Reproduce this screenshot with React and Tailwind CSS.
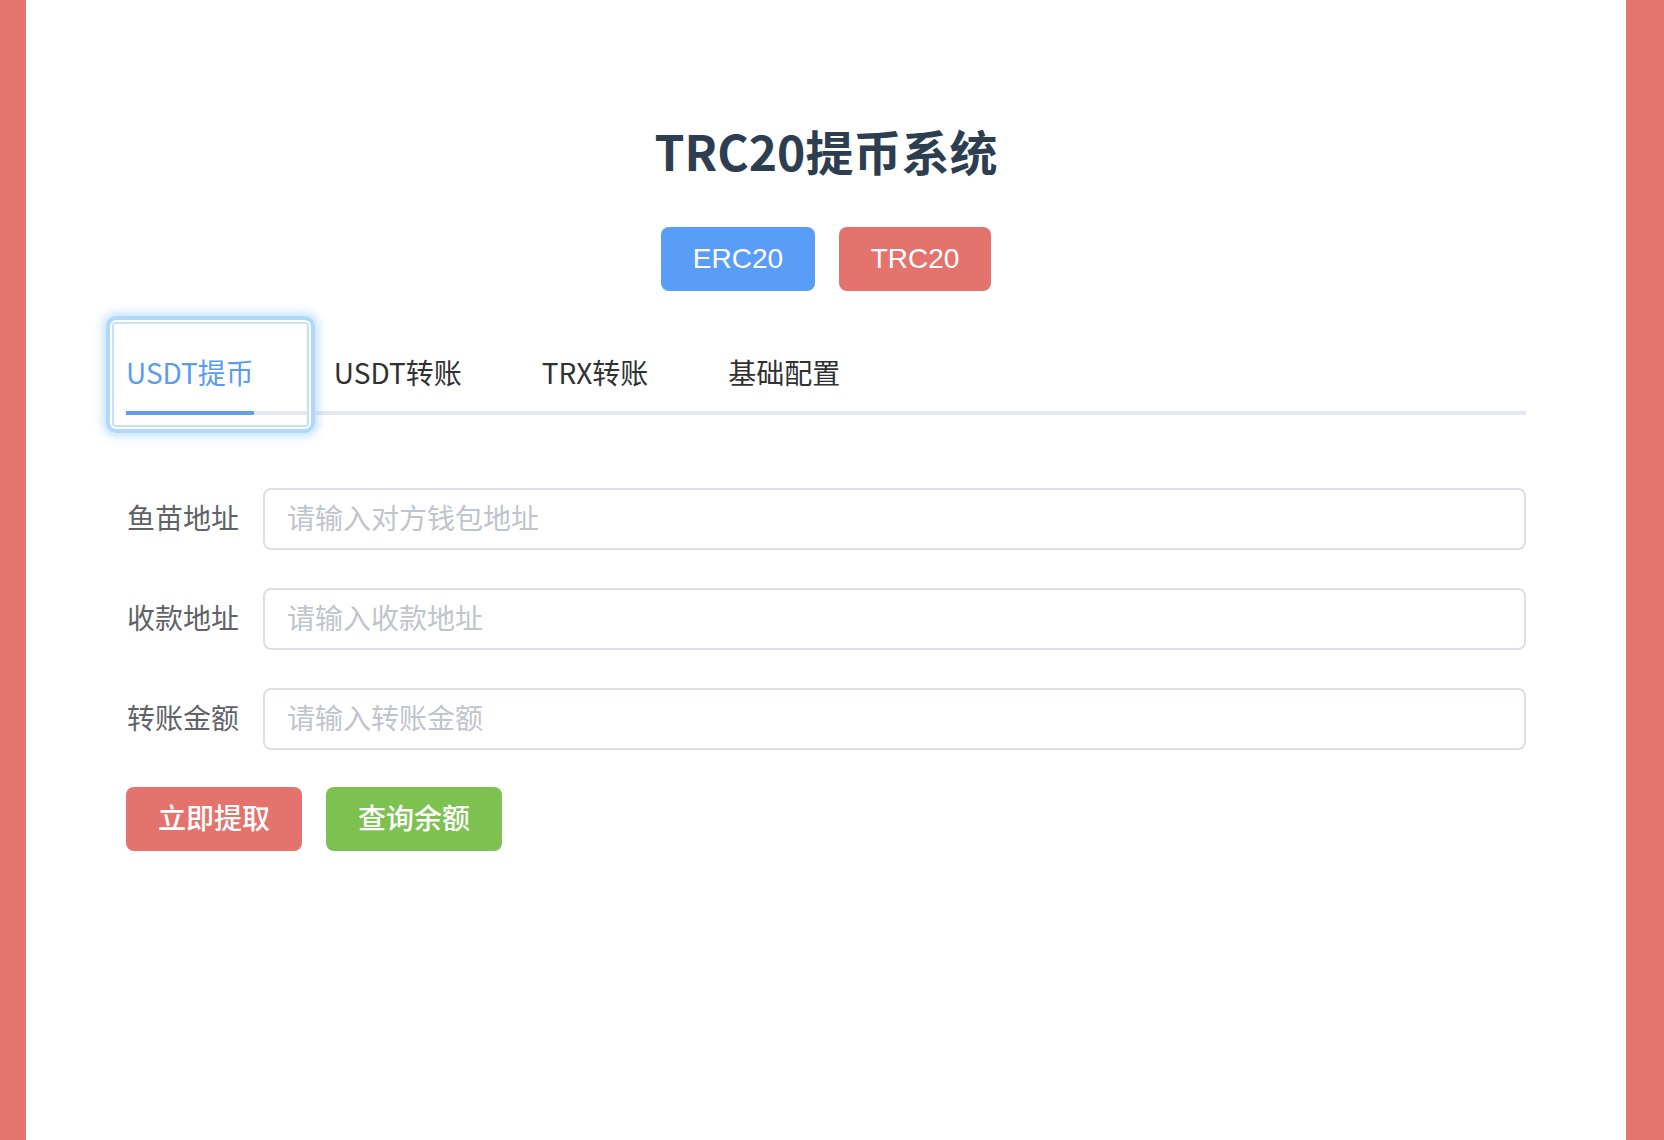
import React from 'react';

const cjk = '"Noto Sans CJK SC", "Noto Sans", sans-serif';

const tabs = ['USDT提币', 'USDT转账', 'TRX转账', '基础配置'];

const fields = [
  { label: '鱼苗地址', placeholder: '请输入对方钱包地址' },
  { label: '收款地址', placeholder: '请输入收款地址' },
  { label: '转账金额', placeholder: '请输入转账金额' },
];

const App = () => {
  return (
    <div className="flex min-h-screen bg-[#e5746d]" style={{ fontFamily: cjk }}>
      <div className="ml-[26px] w-[1600px] bg-white pt-[121px]">
        {/* 標題 */}
        <h1 className="h-[60px] text-center text-[48px] font-bold leading-[58px] text-[#2c3e50]">
          TRC20提币系统
        </h1>

        {/* 鏈切換 */}
        <div className="mt-[46px] flex justify-center gap-[24px]">
          <button className="h-[64px] w-[154px] rounded-[8px] bg-[#589df7] text-[28px] text-white font-['Liberation_Sans',Arial,sans-serif]">
            ERC20
          </button>
          <button className="h-[64px] w-[152px] rounded-[8px] bg-[#e4736d] text-[28px] text-white font-['Liberation_Sans',Arial,sans-serif]">
            TRC20
          </button>
        </div>

        <div className="px-[100px]">
          {/* 分頁 */}
          <div className="relative mt-[44px] flex h-[80px]">
            <div className="absolute bottom-0 left-0 right-0 h-[4px] bg-[#e4e7ed]" />
            {tabs.map((t, i) => {
              const active = i === 0;
              const pad =
                i === 0 ? 'pl-0 pr-[40px]' : i === tabs.length - 1 ? 'pl-[40px] pr-0' : 'px-[40px]';
              return (
                <div
                  key={t}
                  className={`relative h-[80px] text-[28px] leading-[74px] ${pad} ${
                    active ? 'text-[#5a9cf0]' : 'text-[#303133]'
                  }`}
                >
                  {t}
                  {active && (
                    <>
                      <span className="absolute bottom-0 left-0 right-[40px] h-[4px] bg-[#5f9ee8]" />
                      <span className="pointer-events-none absolute -left-[20px] -right-[21px] -top-[19px] -bottom-[18px] rounded-[10px] border-[4px] border-[#b0d8fb] shadow-[0_0_10px_3px_rgba(130,195,255,0.5),inset_0_0_0_2px_#ffffff,inset_0_0_0_4px_#c3e1fc]" />
                    </>
                  )}
                </div>
              );
            })}
          </div>

          {/* 表單 */}
          <div className="mt-[73px] flex flex-col gap-[38px]">
            {fields.map((f) => (
              <div key={f.label} className="flex items-center">
                <label className="w-[137px] shrink-0 pb-[4px] pr-[24px] text-right text-[28px] text-[#606266]">
                  {f.label}
                </label>
                <input
                  className="h-[62px] flex-1 rounded-[8px] border-2 border-[#dcdfe6] bg-white pb-[4px] pl-[22px] text-[28px] text-[#606266] outline-none placeholder:text-[#c0c4cc]"
                  placeholder={f.placeholder}
                />
              </div>
            ))}
          </div>

          <div className="mt-[37px] flex gap-[24px]">
            <button className="h-[64px] w-[176px] rounded-[8px] bg-[#e4736d] pb-[4px] text-[28px] font-medium text-white">
              立即提取
            </button>
            <button className="h-[64px] w-[176px] rounded-[8px] bg-[#7dc150] pb-[4px] text-[28px] font-medium text-white">
              查询余额
            </button>
          </div>
        </div>
      </div>
    </div>
  );
};

export default App;
